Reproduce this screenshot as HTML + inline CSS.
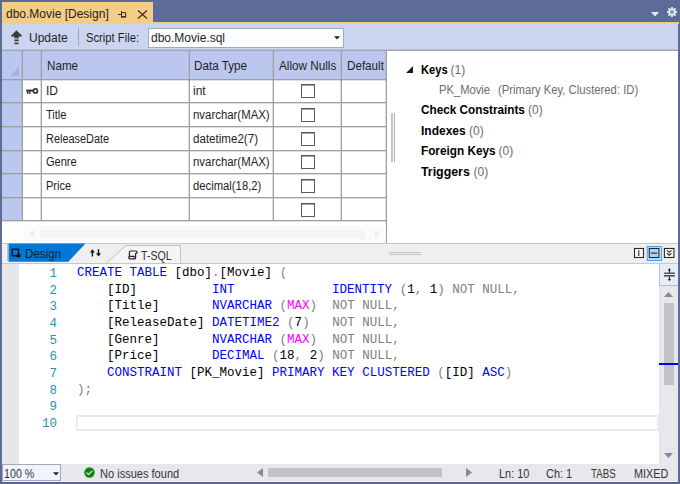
<!DOCTYPE html>
<html><head><meta charset="utf-8">
<style>
*{margin:0;padding:0;box-sizing:border-box}
html,body{width:680px;height:484px;overflow:hidden}
body{position:relative;background:#5d6b99;font-family:"Liberation Sans",sans-serif;font-size:12px;color:#1e1e1e}
.a{position:absolute}
.t{position:absolute;white-space:pre;line-height:14px}
.vl{position:absolute;width:1px;background:#a0a0a0;box-shadow:-1px 0 0 rgba(160,160,160,0.35)}
.hl{position:absolute;height:1px;background:#a0a0a0;box-shadow:0 1px 0 rgba(160,160,160,0.35)}
.cb{position:absolute;width:14px;height:14px;border:1px solid #5a5a5a;background:#fff;box-shadow:inset 0 1px 0 #a6a6a6}
.code{position:absolute;font-family:"Liberation Mono",monospace;font-size:12.5px;white-space:pre;line-height:16.67px}
.k{color:#0000ff}.g{color:#808080}.m{color:#ff00ff}.b{color:#000}
.ln{position:absolute;font-family:"Liberation Mono",monospace;font-size:12.5px;color:#2b91af;text-align:right;width:40px;line-height:16.67px}
.pn{position:absolute;left:421px;font-weight:bold;color:#000;white-space:pre}
.pn{line-height:14px}.pc{color:#6d6d6d}
.st{top:467px;font-size:12px;color:#333}
</style></head><body>
<!-- title tab -->
<div class="a" style="left:2px;top:2px;width:151px;height:20px;background:#f5cc84"></div>
<div class="t" style="left:6px;top:7px;font-size:12px;color:#1e1e1e">dbo.Movie [Design]</div>
<svg class="a" style="left:118px;top:11px" width="9" height="8" viewBox="0 0 9 8"><path d="M0 3.5H3.5M3.5 0V7M3.5 1.6H7.6V5.6H3.5" fill="none" stroke="#3a3226" stroke-width="1"/><rect x="3.5" y="5" width="4.6" height="1.6" fill="#3a3226"/></svg>
<svg class="a" style="left:137px;top:9.5px" width="11" height="9" viewBox="0 0 11 9"><path d="M1 0.5L10 8.5M10 0.5L1 8.5" stroke="#3a3226" stroke-width="1.15"/></svg>
<svg class="a" style="left:651px;top:12px" width="8" height="5" viewBox="0 0 8 5"><path d="M0 0H8L4 4.5Z" fill="#e8eaf5"/></svg>
<svg class="a" style="left:667.4px;top:6.9px" width="10" height="10" viewBox="0 0 10 10"><g fill="#e8eaf5"><circle cx="5" cy="5" r="3.5"/><rect x="4.1" y="0" width="1.8" height="10"/><rect x="0" y="4.1" width="10" height="1.8"/><rect x="4.1" y="0" width="1.8" height="10" transform="rotate(45 5 5)"/><rect x="4.1" y="0" width="1.8" height="10" transform="rotate(-45 5 5)"/></g><circle cx="5" cy="5" r="1.7" fill="#5d6b99"/><circle cx="5" cy="5" r="0.6" fill="#e8eaf5"/></svg>
<div class="a" style="left:2px;top:22px;width:677px;height:2px;background:#f5cc84"></div>
<!-- toolbar -->
<div class="a" style="left:2px;top:24px;width:676px;height:26px;background:#ccd5f0"></div>
<div class="a" style="left:2px;top:49px;width:676px;height:1px;background:#b9c0d8"></div><div class="a" style="left:2px;top:50px;width:676px;height:1px;background:#9fa4b4"></div>
<svg class="a" style="left:11px;top:30px" width="11" height="15" viewBox="0 0 11 15"><path d="M5.5 0.3L11 5.8V6.6H7.7V8.3H3.3V6.6H0V5.8Z" fill="#3d3d3d"/><rect x="3.3" y="8.3" width="4.4" height="1.3" fill="#9a9ca6"/><rect x="3.3" y="9.6" width="4.4" height="1.6" fill="#3d3d3d"/><rect x="3.3" y="12.6" width="4.4" height="1.6" fill="#3d3d3d"/></svg>
<div class="t" style="left:29px;top:31px;font-size:12px">Update</div>
<div class="a" style="left:78px;top:28px;width:1px;height:18px;background:#9aa3c0"></div>
<div class="t" style="left:86px;top:31px;font-size:12px;transform:scaleX(0.935);transform-origin:0 0">Script File:</div>
<div class="a" style="left:148px;top:28px;width:196px;height:20px;background:#fcfdff;border:1px solid #a4a8b8"></div>
<div class="t" style="left:151px;top:31px;font-size:12px">dbo.Movie.sql</div>
<svg class="a" style="left:334px;top:36px" width="6" height="4" viewBox="0 0 6 4"><path d="M0 0.2H6L3 3.4Z" fill="#1e1e1e"/></svg>

<!-- grid -->
<div class="a" style="left:2px;top:51px;width:385px;height:192px;background:#fff"></div>
<div class="a" style="left:2px;top:51px;width:384px;height:28px;background:#bcc7f0"></div>
<div class="a" style="left:2px;top:79px;width:20px;height:141px;background:#bcc7f0"></div>
<svg class="a" style="left:10px;top:67px" width="9" height="9" viewBox="0 0 9 9"><path d="M9 0V9H0Z" fill="#a8b2d8"/></svg>
<div class="vl" style="left:22px;top:51px;height:169px"></div>
<div class="vl" style="left:41px;top:51px;height:169px"></div>
<div class="vl" style="left:189px;top:51px;height:169px"></div>
<div class="vl" style="left:273px;top:51px;height:169px"></div>
<div class="vl" style="left:341px;top:51px;height:169px"></div>
<div class="vl" style="left:386px;top:51px;height:192px"></div>
<div class="hl" style="left:2px;top:79px;width:384px"></div>
<div class="hl" style="left:2px;top:102px;width:384px"></div>
<div class="hl" style="left:2px;top:126px;width:384px"></div>
<div class="hl" style="left:2px;top:150px;width:384px"></div>
<div class="hl" style="left:2px;top:173px;width:384px"></div>
<div class="hl" style="left:2px;top:197px;width:384px"></div>
<div class="hl" style="left:2px;top:220px;width:384px"></div>
<div class="t" style="left:47px;top:59px;transform:scaleX(0.97);transform-origin:0 0">Name</div>
<div class="t" style="left:194px;top:59px;transform:scaleX(0.975);transform-origin:0 0">Data Type</div>
<div class="t" style="left:278.5px;top:59px;transform:scaleX(0.976);transform-origin:0 0">Allow Nulls</div>
<div class="t" style="left:347px;top:59px;transform:scaleX(0.97);transform-origin:0 0">Default</div>
<svg class="a" style="left:25px;top:87px" width="14" height="8" viewBox="0 0 14 8"><rect x="1.1" y="2.6" width="7.5" height="2" fill="#333"/><rect x="2" y="4.4" width="1.5" height="2.5" fill="#333"/><rect x="4.1" y="4.4" width="1.5" height="2.5" fill="#333"/><circle cx="10.4" cy="3.9" r="2.05" fill="none" stroke="#333" stroke-width="1.7"/></svg>
<div class="t" style="left:46px;top:84px">ID</div><div class="t" style="left:193px;top:84px">int</div>
<div class="t" style="left:46px;top:108px;transform:scaleX(0.92);transform-origin:0 0">Title</div><div class="t" style="left:193px;top:108px;transform:scaleX(0.95);transform-origin:0 0">nvarchar(MAX)</div>
<div class="t" style="left:46px;top:131.5px;transform:scaleX(0.91);transform-origin:0 0">ReleaseDate</div><div class="t" style="left:193px;top:131.5px;transform:scaleX(0.965);transform-origin:0 0">datetime2(7)</div>
<div class="t" style="left:46px;top:155px;transform:scaleX(0.92);transform-origin:0 0">Genre</div><div class="t" style="left:193px;top:155px;transform:scaleX(0.95);transform-origin:0 0">nvarchar(MAX)</div>
<div class="t" style="left:46px;top:179px;transform:scaleX(0.92);transform-origin:0 0">Price</div><div class="t" style="left:193px;top:179px;transform:scaleX(0.94);transform-origin:0 0">decimal(18,2)</div>
<div class="cb" style="left:301px;top:84px"></div>
<div class="cb" style="left:301px;top:108px"></div>
<div class="cb" style="left:301px;top:132px"></div>
<div class="cb" style="left:301px;top:155px"></div>
<div class="cb" style="left:301px;top:179px"></div>
<div class="cb" style="left:301px;top:203px"></div>
<!-- h scroll under grid -->
<div class="a" style="left:23px;top:225px;width:363px;height:17px;background:#fbfbfb"></div>
<div class="a" style="left:40px;top:230px;width:325px;height:9px;background:#f4f4f5"></div>
<svg class="a" style="left:29px;top:230px" width="5" height="8" viewBox="0 0 5 8"><path d="M5 0V8L0 4Z" fill="#ebebf0"/></svg>
<svg class="a" style="left:375px;top:230px" width="5" height="8" viewBox="0 0 5 8"><path d="M0 0V8L5 4Z" fill="#ebebf0"/></svg>

<!-- right panel -->
<div class="a" style="left:387px;top:51px;width:291px;height:192px;background:#fff"></div>
<div class="a" style="left:391px;top:113px;width:2px;height:49px;background:#c4c4c4"></div>
<div class="a" style="left:394px;top:113px;width:1px;height:49px;background:#b0b0b0"></div>
<svg class="a" style="left:406px;top:66px" width="7" height="7" viewBox="0 0 7 7"><path d="M7 0V7H0Z" fill="#1e1e1e"/></svg>
<div class="pn" style="top:63px;transform:scaleX(0.93);transform-origin:0 0">Keys</div><div class="t pc" style="left:450.5px;top:63px">(1)</div>
<div class="t" style="left:439px;top:83px;color:#6d6d6d;transform:scaleX(0.934);transform-origin:0 0">PK_Movie</div>
<div class="t" style="left:498px;top:83px;color:#6d6d6d;transform:scaleX(0.94);transform-origin:0 0">(Primary Key, Clustered: ID)</div>
<div class="pn" style="top:103px;transform:scaleX(0.98);transform-origin:0 0">Check Constraints</div><div class="t pc" style="left:528px;top:103px">(0)</div>
<div class="pn" style="top:123.7px">Indexes</div><div class="t pc" style="left:469px;top:123.7px">(0)</div>
<div class="pn" style="top:144.1px;transform:scaleX(0.98);transform-origin:0 0">Foreign Keys</div><div class="t pc" style="left:498.5px;top:144.1px">(0)</div>
<div class="pn" style="top:164.5px;transform:scaleX(1.03);transform-origin:0 0">Triggers</div><div class="t pc" style="left:473.5px;top:164.5px">(0)</div>

<!-- tab bar -->
<div class="a" style="left:2px;top:243px;width:676px;height:21px;background:#efeff1"></div>
<div class="a" style="left:2px;top:243px;width:676px;height:1px;background:#c8c8cc"></div>
<div class="a" style="left:2px;top:263px;width:676px;height:1px;background:#c8c8cc"></div>
<div class="a" style="left:389px;top:252px;width:32px;height:1px;background:#c4c4c4"></div><div class="a" style="left:389px;top:254px;width:32px;height:1px;background:#c4c4c4"></div>
<svg class="a" style="left:8px;top:243px" width="180" height="21" viewBox="0 0 180 21">
<path d="M0.5 18.7V0.5H77.5L60.3 18.7Z" fill="#0078d7"/>
<path d="M98.7 20L118 2.5H172.5V20" fill="#f5f5f5" stroke="#c0c0c0"/>
</svg>
<div class="a" style="left:7px;top:243px;width:1px;height:18px;background:#c0c0c0"></div>
<svg class="a" style="left:10.5px;top:247.5px" width="11" height="11" viewBox="0 0 11 11"><rect x="1.2" y="1.2" width="6.3" height="6.6" fill="none" stroke="#111" stroke-width="1.4"/><circle cx="7.5" cy="7.6" r="2.05" fill="#111"/></svg>
<div class="t" style="left:25px;top:246.5px;font-size:12px;color:#1e1e1e;transform:scaleX(0.967);transform-origin:0 0">Design</div>
<svg class="a" style="left:89px;top:248px" width="13" height="10" viewBox="0 0 13 10"><path d="M3.4 3V8.6M9.5 1.2V6.8" stroke="#111" stroke-width="1.4"/><path d="M0.9 4.6L3.4 1.2L5.9 4.6ZM7 5.2L9.5 8.6L12 5.2Z" fill="#111"/></svg>
<svg class="a" style="left:127.5px;top:249.5px" width="10" height="10" viewBox="0 0 10 10"><path d="M2.6 1H7.8A1.25 1.25 0 0 1 7.8 3.5H7.2M2.6 1A1.4 1.4 0 0 0 1.4 2.4V6.6M7.6 3.2V7.6A1.3 1.3 0 0 1 6.3 8.9H2A1.3 1.3 0 0 1 2 6.3H6V7.8" fill="none" stroke="#222" stroke-width="1.2"/></svg>
<div class="t" style="left:141px;top:249px;font-size:12px;color:#333;transform:scaleX(0.886);transform-origin:0 0">T-SQL</div>
<svg class="a" style="left:633px;top:246px" width="42" height="15" viewBox="0 0 42 15">
<rect x="1.5" y="2.5" width="9" height="9" fill="#f8f8f8" stroke="#2a2a2a" stroke-width="1.1"/>
<path d="M5.8 4.2V10" stroke="#2a2a2a" stroke-width="1.1"/>
<rect x="14.2" y="0.5" width="14.4" height="14" fill="#c5dcf5" stroke="#4aa0f0" stroke-width="1"/>
<rect x="16.3" y="2.5" width="9.6" height="9" fill="#b9d4f0" stroke="#2a2a2a" stroke-width="1.1"/>
<path d="M18 7.2H24.2" stroke="#55636f" stroke-width="1.8"/>
<rect x="31.4" y="2.5" width="9.5" height="9" fill="#f8f8f8" stroke="#2a2a2a" stroke-width="1.1"/>
<path d="M33.9 4.3L36.2 6.3L38.5 4.3M33.9 7.2L36.2 9.2L38.5 7.2" fill="none" stroke="#2a2a2a" stroke-width="1.1"/>
</svg>

<!-- editor -->
<div class="a" style="left:2px;top:264px;width:676px;height:200px;background:#fff"></div>
<div class="a" style="left:2px;top:264px;width:17px;height:200px;background:#e6e7e8"></div>
<div class="a" style="left:76px;top:415px;width:583px;height:16px;border:2px solid #eaeaf2"></div>
<div class="ln" style="left:17px;top:266px">1<br>2<br>3<br>4<br>5<br>6<br>7<br>8<br>9<br>10</div>
<div class="code" style="left:77px;top:265px"><span class="k">CREATE</span> <span class="k">TABLE</span> <span class="b">[dbo]</span><span class="g">.</span><span class="b">[Movie]</span> <span class="g">(</span>
    <span class="b">[ID]</span>          <span class="k">INT</span>             <span class="k">IDENTITY</span> <span class="g">(</span><span class="b">1</span><span class="g">,</span> <span class="b">1</span><span class="g">)</span> <span class="g">NOT NULL,</span>
    <span class="b">[Title]</span>       <span class="k">NVARCHAR</span> <span class="g">(</span><span class="m">MAX</span><span class="g">)</span>  <span class="g">NOT NULL,</span>
    <span class="b">[ReleaseDate]</span> <span class="k">DATETIME2</span> <span class="g">(</span><span class="b">7</span><span class="g">)</span>   <span class="g">NOT NULL,</span>
    <span class="b">[Genre]</span>       <span class="k">NVARCHAR</span> <span class="g">(</span><span class="m">MAX</span><span class="g">)</span>  <span class="g">NOT NULL,</span>
    <span class="b">[Price]</span>       <span class="k">DECIMAL</span> <span class="g">(</span><span class="b">18</span><span class="g">,</span> <span class="b">2</span><span class="g">)</span> <span class="g">NOT NULL,</span>
    <span class="k">CONSTRAINT</span> <span class="b">[PK_Movie]</span> <span class="k">PRIMARY</span> <span class="k">KEY</span> <span class="k">CLUSTERED</span> <span class="g">(</span><span class="b">[ID]</span> <span class="k">ASC</span><span class="g">)</span>
<span class="g">);</span>
</div>
<!-- editor split button + vscroll -->
<div class="a" style="left:659px;top:264px;width:19px;height:200px;background:#e8e8ec"></div>
<div class="a" style="left:659px;top:264px;width:19px;height:22px;background:#e6ebfa;border-left:1px solid #b4bcd8;border-bottom:1px solid #b4bcd8"></div>
<svg class="a" style="left:663px;top:267px" width="12" height="16" viewBox="0 0 12 16"><path d="M6.4 2V5.8M6.4 9.5V13.2" stroke="#1e1e1e" stroke-width="1.1"/><path d="M4.7 3.3L6.4 1.2L8.1 3.3ZM4.7 12L6.4 14.1L8.1 12Z" fill="#1e1e1e"/><path d="M1 6.2H11.8" stroke="#222" stroke-width="1.1"/><path d="M1 8.8H11.8" stroke="#444" stroke-width="1.5"/></svg>
<svg class="a" style="left:664px;top:292px" width="9" height="5" viewBox="0 0 9 5"><path d="M0 5H9L4.5 0Z" fill="#868999"/></svg>
<div class="a" style="left:664px;top:303px;width:10px;height:82px;background:#c2c3c9"></div>
<div class="a" style="left:659px;top:363px;width:19px;height:2px;background:#0000ff"></div>
<svg class="a" style="left:664px;top:453px" width="9" height="5" viewBox="0 0 9 5"><path d="M0 0H9L4.5 5Z" fill="#868999"/></svg>

<!-- status bar -->
<div class="a" style="left:2px;top:464px;width:676px;height:17px;background:#e8e8ec"></div><div class="a" style="left:2px;top:481px;width:676px;height:1px;background:#f6f6f9"></div><div class="a" style="left:0;top:482px;width:680px;height:1px;background:#52618f"></div>
<div class="a" style="left:2px;top:464px;width:59px;height:17px;background:#f0f3fb;border:1px solid #a4a8b8"></div>
<div class="t st" style="left:4px;transform:scaleX(0.89);transform-origin:0 0">100 %</div>
<svg class="a" style="left:52.5px;top:471.8px" width="6" height="4" viewBox="0 0 6 4"><path d="M0 0.2H6L3 3.4Z" fill="#1e1e1e"/></svg>
<svg class="a" style="left:84px;top:467px" width="11" height="11" viewBox="0 0 11 11"><circle cx="5.5" cy="5.5" r="5.2" fill="#138413"/><path d="M2.4 5.6L4.6 7.5L8.4 3.9" fill="none" stroke="#d6ecd6" stroke-width="1.2"/></svg>
<div class="t st" style="left:100px;transform:scaleX(0.92);transform-origin:0 0">No issues found</div>
<svg class="a" style="left:257px;top:468px" width="6" height="9" viewBox="0 0 6 9"><path d="M6 0V9L0 4.5Z" fill="#868999"/></svg>
<div class="a" style="left:268px;top:468px;width:174px;height:9px;background:#c2c3c9"></div>
<svg class="a" style="left:466px;top:468px" width="6" height="9" viewBox="0 0 6 9"><path d="M0 0V9L6 4.5Z" fill="#868999"/></svg>
<div class="t st" style="left:498.5px;transform:scaleX(0.91);transform-origin:0 0">Ln: 10</div>
<div class="t st" style="left:546px;transform:scaleX(0.91);transform-origin:0 0">Ch: 1</div>
<div class="t st" style="left:590.7px;transform:scaleX(0.81);transform-origin:0 0">TABS</div>
<div class="t st" style="left:634px;transform:scaleX(0.9);transform-origin:0 0">MIXED</div>
</body></html>
